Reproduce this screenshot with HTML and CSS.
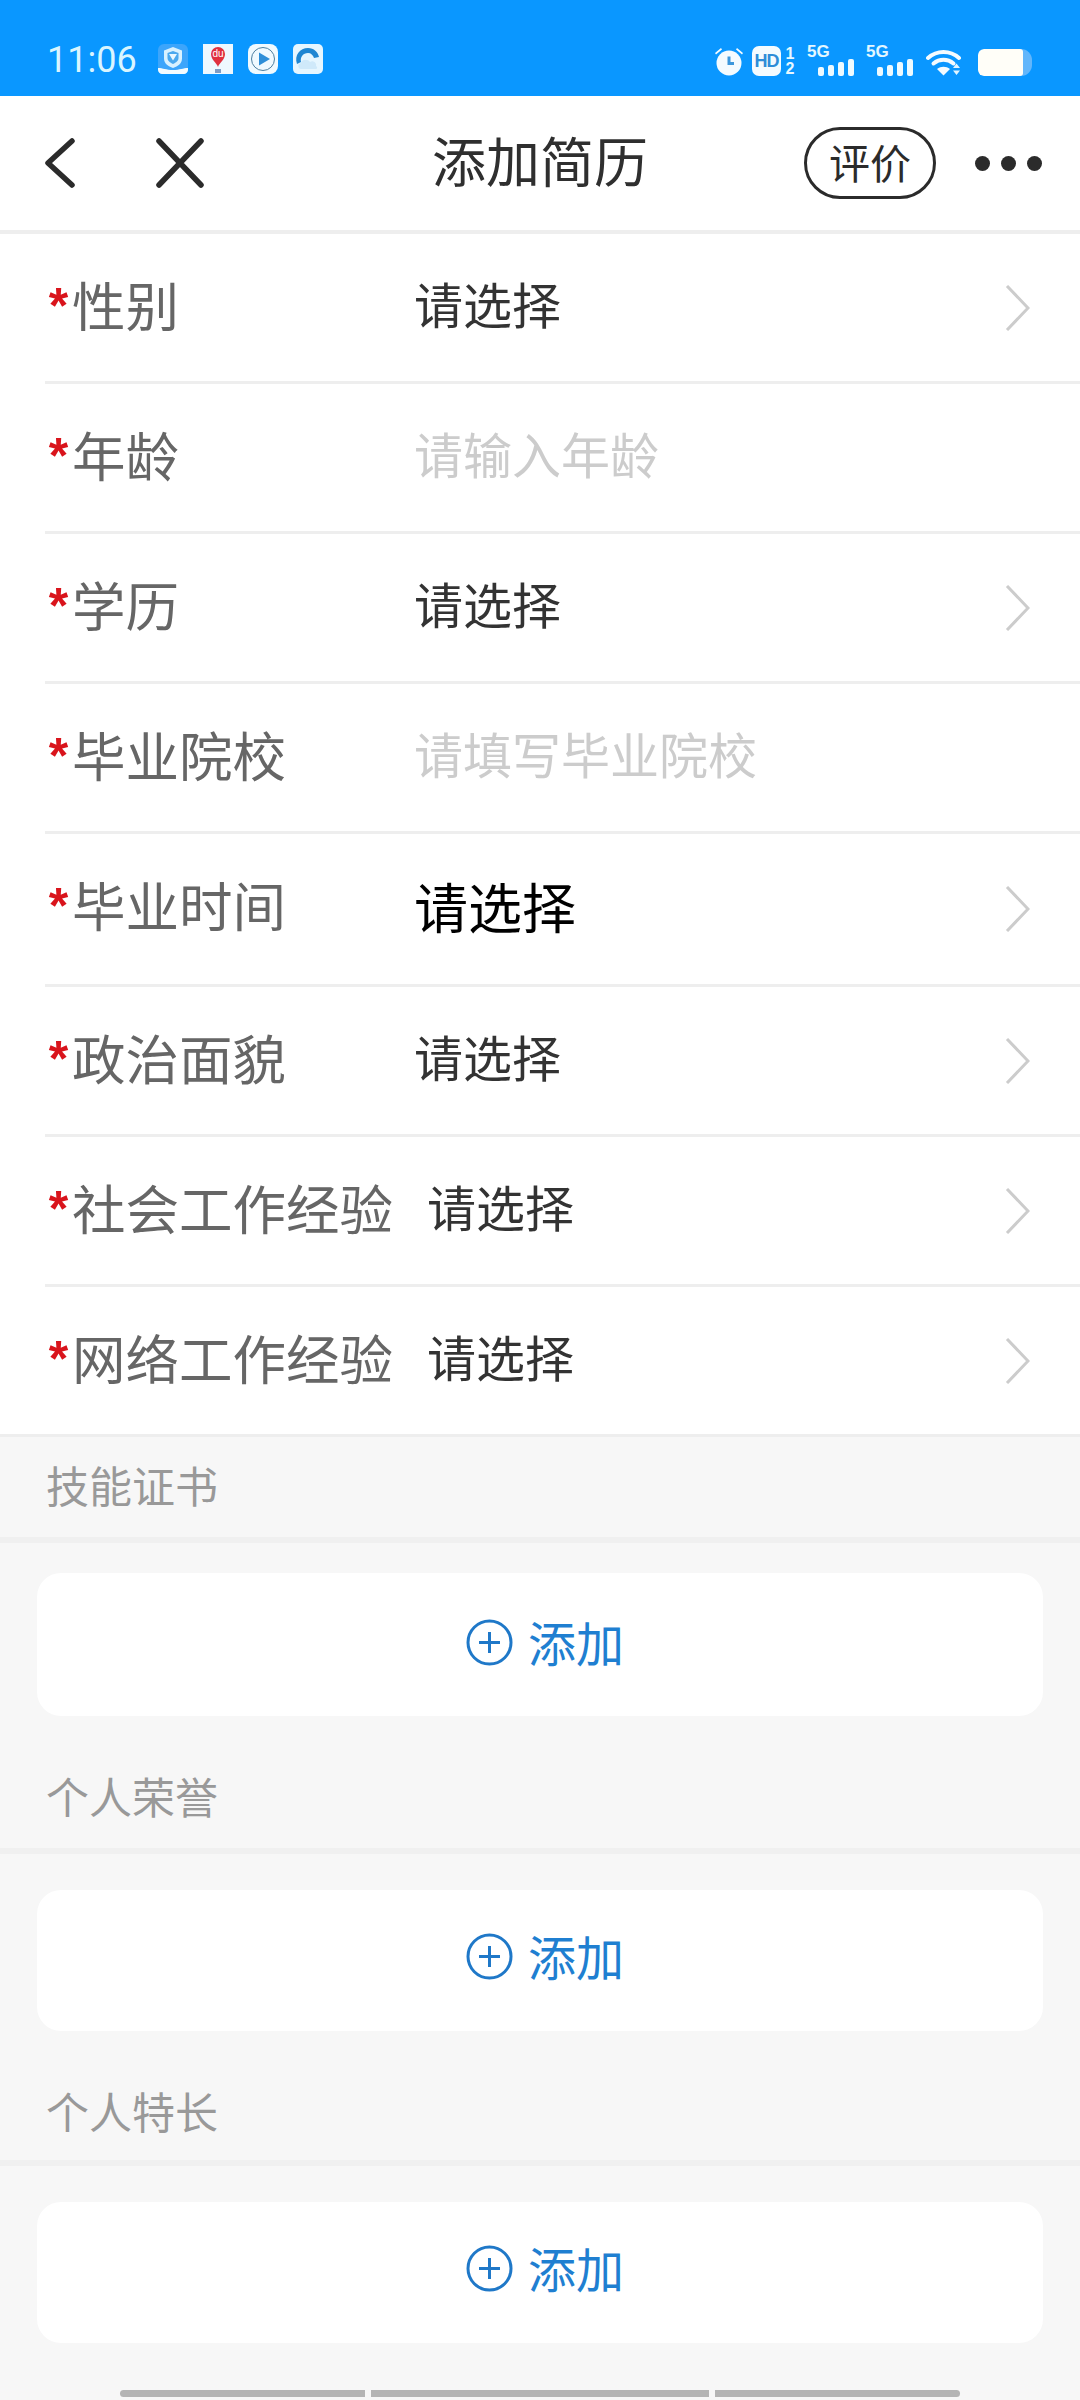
FILE: index.html
```html
<!DOCTYPE html>
<html lang="zh-CN">
<head>
    <meta charset="UTF-8">
    <meta name="viewport" content="width=device-width, initial-scale=1.0">
    <title>添加简历</title>
    <link rel="stylesheet" href="styles.css">
</head>
<body>

    <div class="status">
        <span class="time">11:06</span>
        <div class="apps">
            <svg width="30" height="30" viewBox="0 0 30 30">
                <rect width="30" height="30" rx="6" fill="#3ca5fb"/>
                <path d="M15 3l9 3.500v8c0 5-4 7.500-9 9.500-5-2-9-4.500-9-9.500v-8z" fill="#d8f1ff"/>
                <path d="M15 7l5.500 2v5c0 3-2.500 4.500-5.500 6-3-1.500-5.500-3-5.500-6v-5z" fill="#4aa8ee"/>
                <path d="M11 10h8l-4 6.500z" fill="#e8f7ff"/>
                <path d="M0 24c5 0 8 2 15 2s10-2 15-2v2c0 2-2 4-4 4h-22c-2 0-4-2-4-4z" fill="#f2fbff"/>
            </svg>
            <svg width="30" height="30" viewBox="0 0 30 30">
                <rect width="30" height="30" fill="#eef8ff"/>
                <path d="M15 23c-1-4-7-7-7-13a7 7 0 0 1 14 0c0 6-6 9-7 13z" fill="#e0303f"/>
                <text x="15" y="12.500" class="du">du</text>
                <rect x="12" y="25" width="6" height="4" fill="#7f9cc4"/>
            </svg>
            <svg width="30" height="30" viewBox="0 0 30 30">
                <rect width="30" height="30" rx="8" fill="#f0faff"/>
                <circle cx="15" cy="15" r="11.500" fill="none" stroke="#4c7f9f" stroke-width="1"/>
                <path d="M11 8.500l11 6.500-11 6.500z" fill="#2f8fd8"/>
            </svg>
            <svg width="30" height="30" viewBox="0 0 30 30">
                <rect width="30" height="30" rx="5" fill="#e6f6ff"/>
                <path d="M4 20c-3-9 3-16 11-16 6 0 10 4 11 9l-5 1c-1-3-3-5-6-5-5 0-8 4-7 9z" fill="#1f86d2"/>
                <path d="M8 25c-3 0-4-5 0-6 1-4 7-4 9-1 3-2 7 1 6 4 2 1 1 3 0 3z" fill="#cfe9fa"/>
            </svg>
        </div>
        <div class="sys">
            <svg class="alarm" width="30" height="29" viewBox="0 0 30 29">
                <circle cx="15" cy="16" r="12.500" fill="#f4fbff"/>
                <path d="M1 6l6-5 1 1.500-6 5zM29 6l-6-5-1 1.500 6 5z" fill="#f4fbff"/>
                <path d="M15 9.500v7h5" fill="none" stroke="#3c97dc" stroke-width="3"/>
            </svg>
            <span class="hd">HD</span>
            <span class="sim"><b>1</b><b>2</b></span>
            <div class="signal">
                <span class="net">5G</span>
                <div class="bars"><i class="b1"></i><i class="b2"></i><i class="b3"></i><i class="b4"></i></div>
            </div>
            <div class="signal">
                <span class="net">5G</span>
                <div class="bars"><i class="b1"></i><i class="b2"></i><i class="b3"></i><i class="b4"></i></div>
            </div>
            <svg class="wifi" width="37" height="26" viewBox="0 0 37 26">
                <path d="M2 8c9-8 22-8 31 0" fill="none" stroke="#f4fbff" stroke-width="4" stroke-linecap="round"/>
                <path d="M7.500 13.500c6-5 14-5 20 0" fill="none" stroke="#f4fbff" stroke-width="4" stroke-linecap="round"/>
                <path d="M11 19c4-3 9-3 13 0l-6.500 6.500z" fill="#f4fbff"/>
                <path d="M30.500 13.500l3.500 4.500h-7zM27 20.500h7l-3.500 4.500z" fill="#e2f5ff"/>
            </svg>
            <div class="battery"><div class="level"></div></div>
        </div>
    </div>

    <div class="nav">
        <div class="nav-left">
            <svg width="32" height="50" viewBox="0 0 32 50">
                <path d="M28 3l-24 22 24 22" fill="none" stroke="#2b2b2b" stroke-width="5.500" stroke-linecap="round" stroke-linejoin="round"/>
            </svg>
            <svg width="48" height="50" viewBox="0 0 48 50">
                <path d="M3 3l42 44M45 3l-42 44" fill="none" stroke="#2b2b2b" stroke-width="5.500" stroke-linecap="round"/>
            </svg>
        </div>
        <div class="nav-title">添加简历</div>
        <div class="nav-right">
            <div class="rate">评价</div>
            <div class="dots"><i></i><i></i><i></i></div>
        </div>
    </div>

    <div class="form">
        <div class="row">
            <div class="label"><span class="star">*</span>性别</div>
            <span class="value">请选择</span>
            <svg class="arrow" width="25" height="46" viewBox="0 0 25 46"><path d="M2 1l21 22-21 22" /></svg>
        </div>
        <div class="row">
            <div class="label"><span class="star">*</span>年龄</div>
            <span class="value hint">请输入年龄</span>
        </div>
        <div class="row">
            <div class="label"><span class="star">*</span>学历</div>
            <span class="value">请选择</span>
            <svg class="arrow" width="25" height="46" viewBox="0 0 25 46"><path d="M2 1l21 22-21 22" /></svg>
        </div>
        <div class="row">
            <div class="label"><span class="star">*</span>毕业院校</div>
            <span class="value hint">请填写毕业院校</span>
        </div>
        <div class="row row-tall">
            <div class="label"><span class="star">*</span>毕业时间</div>
            <span class="value value-big">请选择</span>
            <svg class="arrow" width="25" height="46" viewBox="0 0 25 46"><path d="M2 1l21 22-21 22" /></svg>
        </div>
        <div class="row">
            <div class="label"><span class="star">*</span>政治面貌</div>
            <span class="value">请选择</span>
            <svg class="arrow" width="25" height="46" viewBox="0 0 25 46"><path d="M2 1l21 22-21 22" /></svg>
        </div>
        <div class="row">
            <div class="label"><span class="star">*</span>社会工作经验</div>
            <span class="value">请选择</span>
            <svg class="arrow" width="25" height="46" viewBox="0 0 25 46"><path d="M2 1l21 22-21 22" /></svg>
        </div>
        <div class="row row-last">
            <div class="label"><span class="star">*</span>网络工作经验</div>
            <span class="value">请选择</span>
            <svg class="arrow" width="25" height="46" viewBox="0 0 25 46"><path d="M2 1l21 22-21 22" /></svg>
        </div>
    </div>

    <div class="section section-first">
        <div class="section-head">技能证书</div>
        <div class="add">
            <svg width="47" height="47" viewBox="0 0 47 47"><circle cx="23.500" cy="23.500" r="21.500"/><path d="M23.500 13v21M13 23.500h21"/></svg>
            <span class="add-text">添加</span>
        </div>
    </div>
    <div class="section">
        <div class="section-head">个人荣誉</div>
        <div class="add">
            <svg width="47" height="47" viewBox="0 0 47 47"><circle cx="23.500" cy="23.500" r="21.500"/><path d="M23.500 13v21M13 23.500h21"/></svg>
            <span class="add-text">添加</span>
        </div>
    </div>
    <div class="section">
        <div class="section-head section-head-short">个人特长</div>
        <div class="add">
            <svg width="47" height="47" viewBox="0 0 47 47"><circle cx="23.500" cy="23.500" r="21.500"/><path d="M23.500 13v21M13 23.500h21"/></svg>
            <span class="add-text">添加</span>
        </div>
    </div>

    <div class="scrollbar"><i class="seg1"></i><i class="seg2"></i><i class="seg3"></i></div>

</body>
</html>
```

FILE: styles.css
```css
* {
    box-sizing: border-box;
}
html, body {
    margin: 0;
    height: 2400px;
    overflow: hidden;
}
body {
    background-color: #f7f7f7;
    font-family: "Noto Sans CJK SC", "Noto Sans", sans-serif;
}

/* status bar */
.status {
    height: 96px;
    background-color: #0a97ff;
    display: flex;
    align-items: center;
    padding: 24px 48px 0 47px;
}
.time {
    font-family: Roboto, sans-serif;
    font-size: 36px;
    line-height: 44px;
    color: #d9f5ff;
    width: 111px;
}
.apps {
    display: flex;
    gap: 15px;
    margin-bottom: 2px;
}
.du {
    font-family: "Liberation Sans", sans-serif;
    font-size: 10px;
    fill: #fff;
    text-anchor: middle;
}
.sys {
    margin-left: auto;
    display: flex;
    align-items: flex-end;
    height: 32px;
    margin-bottom: 1px;
}
.alarm {
    margin-right: 8px;
}
.hd {
    width: 29px;
    height: 30px;
    background-color: #f4fbff;
    color: #2f8dd8;
    border-radius: 7px;
    font-family: "Liberation Sans", sans-serif;
    font-weight: bold;
    font-size: 18px;
    line-height: 30px;
    text-align: center;
    letter-spacing: -1px;
}
.sim {
    width: 10px;
    margin-left: 4px;
    display: flex;
    flex-direction: column;
    align-items: center;
    color: #e8f8ff;
    font-family: "Liberation Sans", sans-serif;
    font-size: 16px;
    line-height: 15px;
}
.signal {
    position: relative;
    width: 47px;
    height: 30px;
    margin-left: 12px;
}
.net {
    position: absolute;
    left: 0;
    top: -2px;
    font-family: "Liberation Sans", sans-serif;
    font-weight: bold;
    font-size: 17px;
    line-height: 16px;
    color: #e4f7ff;
}
.bars {
    position: absolute;
    right: 0;
    bottom: 0;
    display: flex;
    align-items: flex-end;
    gap: 4px;
}
.bars i {
    display: block;
    width: 6px;
    background-color: #eefaff;
    border-radius: 2px;
}
.b1 { height: 9px; }
.b2 { height: 11px; }
.b3 { height: 14px; }
.b4 { height: 17px; }
.wifi {
    margin-left: 13px;
}
.battery {
    width: 54px;
    height: 27px;
    margin-left: 15px;
    background-color: #62b6fb;
    border-radius: 6px 11px 11px 6px;
    overflow: hidden;
}
.level {
    width: 45px;
    height: 27px;
    background-color: #fffef8;
    border-radius: 6px 3px 3px 6px;
}

/* nav */
.nav {
    height: 138px;
    background-color: #fff;
    border-bottom: 4px solid #eee;
    display: grid;
    grid-template-columns: 1fr auto 1fr;
    align-items: center;
}
.nav-left {
    display: flex;
    align-items: center;
    gap: 80px;
    padding-left: 44px;
}
.nav-title {
    font-size: 54px;
    line-height: 60px;
    color: #2f2f2f;
    margin-bottom: 6px;
}
.nav-right {
    display: flex;
    align-items: center;
    justify-content: flex-end;
    padding-right: 38px;
}
.rate {
    width: 132px;
    height: 72px;
    border: 3px solid #2b2b2b;
    border-radius: 36px;
    font-size: 41px;
    line-height: 62px;
    text-align: center;
    color: #2b2b2b;
}
.dots {
    display: flex;
    gap: 11px;
    margin-left: 39px;
}
.dots i {
    display: block;
    width: 15px;
    height: 15px;
    border-radius: 50%;
    background-color: #2b2b2b;
}

/* form rows */
.form {
    background-color: #fff;
}
.row {
    height: 150px;
    margin-left: 45px;
    padding-right: 50px;
    border-bottom: 3px solid #eee;
    display: flex;
    align-items: center;
}
.row-tall {
    height: 153px;
}
.row-last {
    margin-left: 0;
    padding-left: 45px;
}
.label {
    min-width: 369px;
    padding-right: 34px;
    padding-bottom: 8px;
    font-size: 53.500px;
    line-height: 60px;
    color: #666;
    white-space: nowrap;
}
.row-tall .label {
    padding-bottom: 11px;
}
.star {
    display: inline-block;
    width: 27px;
    color: #d9141c;
    font-family: "Liberation Sans", sans-serif;
    font-weight: bold;
    font-size: 50px;
    line-height: 50px;
    text-align: center;
    vertical-align: 4px;
}
.value {
    padding-bottom: 10px;
    font-size: 49px;
    line-height: 60px;
    color: #333;
}
.value-big {
    padding-bottom: 7px;
    font-size: 54px;
    color: #000;
}
.hint {
    color: #ccc;
}
.arrow {
    margin-left: auto;
    fill: none;
    stroke: #ccc;
    stroke-width: 3;
}

/* lower sections */
.section {
    margin-top: 33px;
}
.section-first {
    margin-top: 1px;
}
.section-head {
    height: 105px;
    padding: 18px 0 0 46px;
    border-bottom: 6px solid #f0f0f0;
    font-size: 43px;
    line-height: 56px;
    color: #999;
}
.section-head-short {
    height: 102px;
}
.add {
    height: 141px;
    margin: 36px 37px 0 37px;
    padding: 0 0 6px 10px;
    background-color: #fff;
    border-radius: 24px;
    display: flex;
    align-items: center;
    justify-content: center;
    gap: 15px;
    color: #1f7fd1;
}
.section-first .add {
    height: 143px;
    margin-top: 30px;
    padding-bottom: 2px;
}
.add svg {
    fill: none;
    stroke: #1f78c8;
    stroke-width: 3;
    margin-bottom: 2px;
}
.add-text {
    font-size: 48px;
    line-height: 60px;
    padding-bottom: 5px;
}

.scrollbar {
    display: flex;
    justify-content: center;
    gap: 6px;
    margin-top: 47px;
}
.scrollbar i {
    display: block;
    height: 7px;
    background-color: #b4b4b4;
}
.seg1 { width: 245px; border-radius: 4px 0 0 4px; }
.seg2 { width: 338px; }
.seg3 { width: 245px; border-radius: 0 4px 4px 0; }
```
